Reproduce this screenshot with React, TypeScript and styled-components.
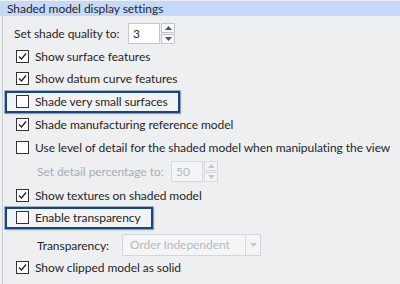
import styled, { createGlobalStyle } from "styled-components";

const GlobalStyle = createGlobalStyle`
  html, body {
    margin: 0;
    padding: 0;
    background: #eeeff1;
  }
  body {
    font-family: Lato, "Noto Sans", sans-serif;
    font-size: 12px;
    letter-spacing: -0.05px;
    color: #262626;
  }
`;

function CheckBox({ checked }: { checked?: boolean }) {
  return (
    <Style.Box>
      {checked && (
        <svg width="11" height="11" viewBox="0 0 11 11">
          <path d="M2 5.5 L4.5 8 L9 2.5" fill="none" stroke="#222" strokeWidth="1.3" />
        </svg>
      )}
    </Style.Box>
  );
}

function Arrow({ up, disabled }: { up?: boolean; disabled?: boolean }) {
  return (
    <svg width="7" height="4" viewBox="0 0 7 4">
      <path d={up ? "M0 4 L3.5 0 L7 4 Z" : "M0 0 L3.5 4 L7 0 Z"} fill={disabled ? "#c4c8cd" : "#555"} />
    </svg>
  );
}

function Spinner({ value, disabled }: { value: string; disabled?: boolean }) {
  return (
    <Style.Spinner>
      <Style.SpinValue $disabled={disabled}>{value}</Style.SpinValue>
      <Style.SpinButtons>
        <Style.SpinButton $disabled={disabled}>
          <Arrow up disabled={disabled} />
        </Style.SpinButton>
        <Style.SpinButton $disabled={disabled}>
          <Arrow disabled={disabled} />
        </Style.SpinButton>
      </Style.SpinButtons>
    </Style.Spinner>
  );
}

function Option({ label, checked, $h }: { label: string; checked?: boolean; $h: number }) {
  return (
    <Style.Row $h={$h}>
      <CheckBox checked={checked} />
      <Style.Label>{label}</Style.Label>
    </Style.Row>
  );
}

function Marked({ label, $h }: { label: string; $h: number }) {
  return (
    <Style.Row $h={$h}>
      <Style.Frame>
        <CheckBox />
        <Style.Label>{label}</Style.Label>
      </Style.Frame>
    </Style.Row>
  );
}

export default function App() {
  return (
    <>
      <GlobalStyle />
      <Style.Panel>
        <Style.Header>Shaded model display settings</Style.Header>
        <Style.List>
          <Style.Row $h={24} $indent={11}>
            <Style.FieldLabel $w={114}>Set shade quality to:</Style.FieldLabel>
            <Spinner value="3" />
          </Style.Row>
          <Option $h={22} checked label="Show surface features" />
          <Option $h={23} checked label="Show datum curve features" />
          <Marked $h={23} label="Shade very small surfaces" />
          <Option $h={22} checked label="Shade manufacturing reference model" />
          <Option $h={24} label="Use level of detail for the shaded model when manipulating the view" />
          <Style.Row $h={25} $indent={34}>
            <Style.FieldLabel $w={134} $disabled>
              Set detail percentage to:
            </Style.FieldLabel>
            <Spinner value="50" disabled />
          </Style.Row>
          <Option $h={23} checked label="Show textures on shaded model" />
          <Marked $h={21} label="Enable transparency" />
          <Style.SelectRow>
            <Style.FieldLabel $w={85}>Transparency:</Style.FieldLabel>
            <Style.Select>
              <Style.SelectValue>Order Independent</Style.SelectValue>
              <Style.SelectArrow>
                <Arrow disabled />
              </Style.SelectArrow>
            </Style.Select>
          </Style.SelectRow>
          <Option $h={22} checked label="Show clipped model as solid" />
        </Style.List>
      </Style.Panel>
    </>
  );
}

const Style = {
  Panel: styled.div`
    width: 400px;
    height: 284px;
    overflow: hidden;
    box-sizing: border-box;
    padding-top: 1px;
  `,
  Header: styled.div`
    height: 15px;
    line-height: 15px;
    background: #c5d9fd;
    padding-left: 7px;
    white-space: nowrap;
  `,
  List: styled.div`
    margin-left: 2px;
    border-left: 1px solid #cdd0d4;
    padding-top: 5px;
    height: 268px;
    display: flex;
    flex-direction: column;
  `,
  Row: styled.div<{ $h: number; $indent?: number }>`
    height: ${({ $h }) => $h}px;
    flex: none;
    display: flex;
    align-items: center;
    padding-left: ${({ $indent }) => $indent ?? 13}px;
    white-space: nowrap;
  `,
  SelectRow: styled.div`
    height: 22px;
    margin-top: 6px;
    flex: none;
    display: flex;
    align-items: center;
    padding-left: 34px;
  `,
  Frame: styled.div`
    margin-left: -11px;
    height: 18px;
    display: inline-flex;
    align-items: center;
    padding: 0 10px 0 9px;
    border: 2px solid #17467f;
    box-shadow: 0 0 0 1px rgba(23, 70, 127, 0.35), 1px 1px 2px rgba(0, 0, 0, 0.2);
    background: #f2f3f4;
  `,
  Box: styled.span`
    width: 11px;
    height: 11px;
    flex: none;
    border: 1px solid #333;
    background: #fff;
    display: inline-flex;
  `,
  Label: styled.span`
    margin-left: 6px;
  `,
  FieldLabel: styled.span<{ $w: number; $disabled?: boolean }>`
    width: ${({ $w }) => $w}px;
    flex: none;
    color: ${({ $disabled }) => ($disabled ? "#a7aeb6" : "inherit")};
  `,
  Spinner: styled.div`
    display: flex;
    width: 47px;
    height: 21px;
  `,
  SpinValue: styled.div<{ $disabled?: boolean }>`
    width: 33px;
    box-sizing: border-box;
    border: 1px solid ${({ $disabled }) => ($disabled ? "#d6d9dd" : "#c3c6ca")};
    background: ${({ $disabled }) => ($disabled ? "#f3f4f5" : "#fff")};
    color: ${({ $disabled }) => ($disabled ? "#b5bac0" : "#262626")};
    padding-left: 4px;
    line-height: 19px;
  `,
  SpinButtons: styled.div`
    width: 14px;
    margin-left: 1px;
    display: flex;
    flex-direction: column;
    gap: 1px;
  `,
  SpinButton: styled.div<{ $disabled?: boolean }>`
    flex: 1;
    box-sizing: border-box;
    border: 1px solid ${({ $disabled }) => ($disabled ? "#d6d9dd" : "#c3c6ca")};
    background: ${({ $disabled }) => ($disabled ? "#f3f4f5" : "#fafafa")};
    display: flex;
    align-items: center;
    justify-content: center;
  `,
  Select: styled.div`
    width: 139px;
    height: 22px;
    box-sizing: border-box;
    border: 1px solid #d3d6da;
    background: #f4f5f6;
    display: flex;
  `,
  SelectValue: styled.div`
    flex: 1;
    padding-left: 7px;
    line-height: 20px;
    color: #b5bac0;
    white-space: nowrap;
  `,
  SelectArrow: styled.div`
    width: 14px;
    border-left: 1px solid #d3d6da;
    display: flex;
    align-items: center;
    justify-content: center;
  `,
};
